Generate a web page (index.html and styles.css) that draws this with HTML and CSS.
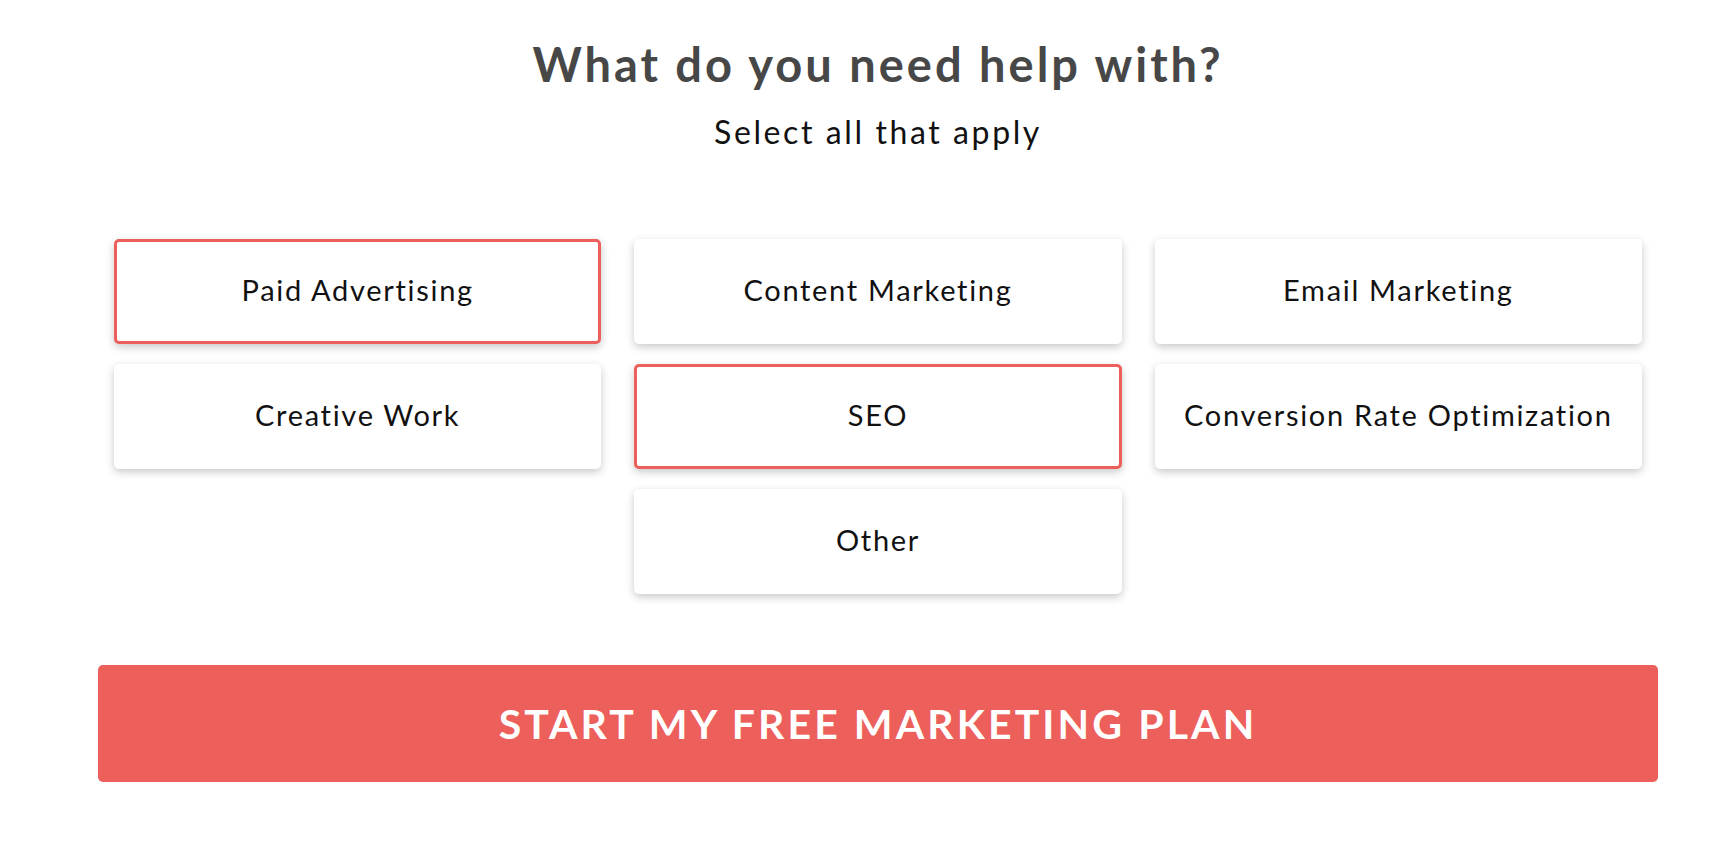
FILE: index.html
```html
<!DOCTYPE html>
<html lang="en">
<head>
  <meta charset="UTF-8" />
  <meta name="viewport" content="width=device-width, initial-scale=1.0" />
  <title>What do you need help with?</title>
  <link rel="stylesheet" href="styles.css">
</head>
<body>

  <main class="wizard">
    <header class="wizard-head">
      <h1>What do you need help with?</h1>
      <p>Select all that apply</p>
    </header>

    <div class="options">
      <button class="option selected">Paid Advertising</button>
      <button class="option">Content Marketing</button>
      <button class="option">Email Marketing</button>
      <button class="option">Creative Work</button>
      <button class="option selected">SEO</button>
      <button class="option">Conversion Rate Optimization</button>
      <button class="option option-other">Other</button>
    </div>

    <button class="start-btn">Start my free marketing plan</button>
  </main>

</body>
</html>
```

FILE: styles.css
```css
body {
  margin: 0;
  font-family: Lato, 'Noto Sans', sans-serif;
  background: #fff;
  color: #111;
}

.wizard {
  width: 1560px;
  margin-left: 98px;
  padding-top: 36px;
}

.wizard-head {
  text-align: center;
}

.wizard-head h1 {
  margin: 0;
  font-size: 47px;
  line-height: 1.2;
  font-weight: 700;
  letter-spacing: 3px;
  color: #474747;
}

.wizard-head p {
  margin: 21px 0 0;
  font-size: 32px;
  line-height: 1.2;
  letter-spacing: 2.6px;
  color: #111;
}

.options {
  display: grid;
  grid-template-columns: repeat(3, 1fr);
  column-gap: 33px;
  row-gap: 20px;
  margin: 87px 16px 0;
}

.option {
  height: 105px;
  display: flex;
  align-items: center;
  justify-content: center;
  background: #fff;
  border: 3px solid transparent;
  border-radius: 5px;
  box-shadow: 0 3px 8px rgba(0, 0, 0, 0.22);
  font-family: Lato, 'Noto Sans', sans-serif;
  font-size: 29px;
  letter-spacing: 1.7px;
  color: #111;
  cursor: pointer;
  padding: 0 0 4px;
}

.option.selected {
  border-color: #ec5f5b;
}

.option-other {
  grid-column: 2;
}

.start-btn {
  display: block;
  width: 100%;
  height: 117px;
  margin-top: 71px;
  background: #ec5f5b;
  border: none;
  border-radius: 5px;
  color: #fff;
  font-family: Lato, 'Noto Sans', sans-serif;
  font-size: 41px;
  font-weight: 700;
  letter-spacing: 3.1px;
  text-transform: uppercase;
  cursor: pointer;
}
```
